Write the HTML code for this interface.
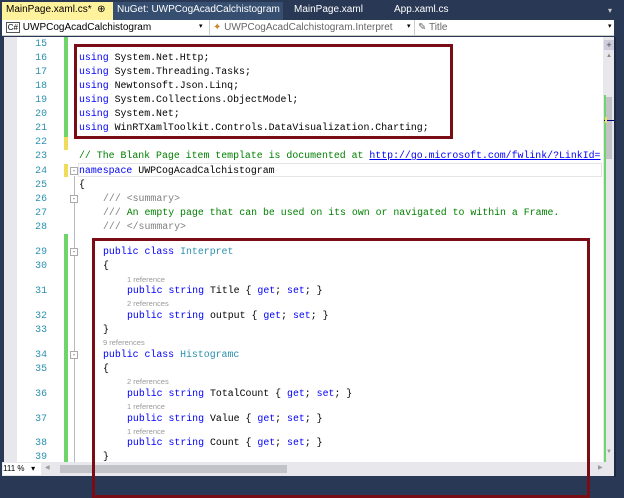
<!DOCTYPE html>
<html><head><meta charset="utf-8"><style>
*{margin:0;padding:0;box-sizing:border-box}
html,body{width:624px;height:485px}
body{background:#293955;position:relative;overflow:hidden;font-family:"Liberation Sans",sans-serif}
.a{position:absolute}
.tab{position:absolute;top:2px;height:18px;font-size:10px;line-height:16px;color:#fff;padding-left:4px}
.ln{position:absolute;left:17px;width:30px;text-align:right;font-family:"Liberation Mono",monospace;font-size:9.9px;color:#2b91af;line-height:12px}
.c{position:absolute;font-family:"Liberation Mono",monospace;font-size:9.9px;line-height:12px;white-space:pre;color:#000}
.k{color:#0000ff}.t{color:#2b91af}.g{color:#008000}.gr{color:#808080}
.r{position:absolute;font-size:7.5px;color:#999;line-height:9px}
.box{position:absolute;border:3px solid #7a0c15}
.ob{position:absolute;left:70px;width:8px;height:8px;border:1px solid #aaa;background:#fff;font-size:8px;line-height:5px;text-align:center;color:#666}
</style></head><body>
<div class="tab" style="left:2px;width:111px;background:#fff29d;color:#000">MainPage.xaml.cs* &nbsp;⊕ ✕</div>
<div class="tab" style="left:113px;width:170px;background:#364e6f">NuGet: UWPCogAcadCalchistogram</div>
<div class="tab" style="left:290px">MainPage.xaml</div>
<div class="tab" style="left:390px">App.xaml.cs</div>
<div class="a" style="left:608px;top:6px;color:#ccc;font-size:8px">▾</div>
<div class="a" style="left:2px;top:20px;width:612px;height:16px;background:#fff;border-bottom:1px solid #ccc"></div>
<div class="a" style="left:3px;top:21px;width:203px;height:14px;background:#fff;font-size:10px;line-height:14px;color:#000">&nbsp;<span style="font-size:8px;border:1px solid #555;padding:0 1px">C#</span> UWPCogAcadCalchistogram</div>
<div class="a" style="left:199px;top:22px;font-size:7px">▾</div>
<div class="a" style="left:209px;top:20px;width:1px;height:16px;background:#ccc"></div>
<div class="a" style="left:213px;top:21px;font-size:10px;line-height:14px;color:#666"><span style="color:#c8852b">✦</span> UWPCogAcadCalchistogram.Interpret</div>
<div class="a" style="left:407px;top:22px;font-size:7px">▾</div>
<div class="a" style="left:414px;top:20px;width:1px;height:16px;background:#ccc"></div>
<div class="a" style="left:418px;top:21px;font-size:10px;line-height:14px;color:#666">✎ Title</div>
<div class="a" style="left:608px;top:22px;font-size:7px">▾</div>
<div class="a" style="left:4px;top:37px;width:13px;height:426px;background:#e8e8ec"></div>
<div class="a" style="left:17px;top:37px;width:586px;height:426px;background:#fff"></div>
<div class="a" style="left:603px;top:37px;width:11px;height:426px;background:#e8e8ec"></div>
<div class="a" style="left:604px;top:40px;width:10px;height:10px;font-size:9px;line-height:10px;color:#444;text-align:center;background:#ccd">+</div>
<div class="a" style="left:606px;top:53px;font-size:6px;color:#888">▲</div>
<div class="a" style="left:604px;top:95px;width:2px;height:368px;background:#6fd46a"></div>
<div class="a" style="left:606px;top:97px;width:6px;height:62px;background:#c2c3c9"></div>
<div class="a" style="left:604px;top:120px;width:12px;height:1px;background:#00008b"></div>
<div class="a" style="left:605px;top:117px;width:2px;height:6px;background:#f0dc5a"></div>
<div class="a" style="left:614px;top:37px;width:2px;height:440px;background:#1c2a44"></div>
<div class="a" style="left:64px;top:37px;width:4px;height:100px;background:#6fd46a"></div>
<div class="a" style="left:64px;top:137px;width:4px;height:13px;background:#f0dc5a"></div>
<div class="a" style="left:64px;top:164px;width:4px;height:13px;background:#f0dc5a"></div>
<div class="a" style="left:64px;top:234px;width:4px;height:229px;background:#6fd46a"></div>
<div class="a" style="left:74px;top:176px;width:1px;height:287px;background:#bbb"></div>
<div class="ob" style="top:167px">-</div>
<div class="ob" style="top:195px">-</div>
<div class="ob" style="top:248px">-</div>
<div class="ob" style="top:351px">-</div>
<div class="a" style="left:78px;top:163px;width:524px;height:14px;border:1px solid #e4e4e4"></div>
<div class="ln" style="top:38px">15</div><div class="ln" style="top:52px">16</div><div class="ln" style="top:66px">17</div><div class="ln" style="top:80px">18</div><div class="ln" style="top:94px">19</div><div class="ln" style="top:108px">20</div><div class="ln" style="top:122px">21</div><div class="ln" style="top:136px">22</div><div class="ln" style="top:150px">23</div><div class="ln" style="top:165px">24</div><div class="ln" style="top:179px">25</div><div class="ln" style="top:193px">26</div><div class="ln" style="top:207px">27</div><div class="ln" style="top:221px">28</div><div class="ln" style="top:246px">29</div><div class="ln" style="top:260px">30</div><div class="ln" style="top:285px">31</div><div class="ln" style="top:310px">32</div><div class="ln" style="top:324px">33</div><div class="ln" style="top:349px">34</div><div class="ln" style="top:363px">35</div><div class="ln" style="top:388px">36</div><div class="ln" style="top:413px">37</div><div class="ln" style="top:437px">38</div><div class="ln" style="top:451px">39</div>
<div class="c" style="left:79px;top:52px"><span class="k">using</span> System.Net.Http;</div>
<div class="c" style="left:79px;top:66px"><span class="k">using</span> System.Threading.Tasks;</div>
<div class="c" style="left:79px;top:80px"><span class="k">using</span> Newtonsoft.Json.Linq;</div>
<div class="c" style="left:79px;top:94px"><span class="k">using</span> System.Collections.ObjectModel;</div>
<div class="c" style="left:79px;top:108px"><span class="k">using</span> System.Net;</div>
<div class="c" style="left:79px;top:122px"><span class="k">using</span> WinRTXamlToolkit.Controls.DataVisualization.Charting;</div>
<div class="c g" style="left:79px;top:150px">// The Blank Page item template is documented at <span style="color:#0000ff;text-decoration:underline">http://go.microsoft.com/fwlink/?LinkId=</span></div>
<div class="c" style="left:79px;top:165px"><span class="k">namespace</span> UWPCogAcadCalchistogram</div>
<div class="c" style="left:79px;top:179px">{</div>
<div class="c gr" style="left:103px;top:193px">/// &lt;summary&gt;</div>
<div class="c" style="left:103px;top:207px"><span class="gr">///</span><span class="g"> An empty page that can be used on its own or navigated to within a Frame.</span></div>
<div class="c gr" style="left:103px;top:221px">/// &lt;/summary&gt;</div>
<div class="c" style="left:103px;top:246px"><span class="k">public class</span> <span class="t">Interpret</span></div>
<div class="c" style="left:103px;top:260px">{</div>
<div class="r" style="left:127px;top:275px">1 reference</div>
<div class="c" style="left:127px;top:285px"><span class="k">public string</span> Title { <span class="k">get</span>; <span class="k">set</span>; }</div>
<div class="r" style="left:127px;top:299px">2 references</div>
<div class="c" style="left:127px;top:310px"><span class="k">public string</span> output { <span class="k">get</span>; <span class="k">set</span>; }</div>
<div class="c" style="left:103px;top:324px">}</div>
<div class="r" style="left:103px;top:338px">9 references</div>
<div class="c" style="left:103px;top:349px"><span class="k">public class</span> <span class="t">Histogramc</span></div>
<div class="c" style="left:103px;top:363px">{</div>
<div class="r" style="left:127px;top:377px">2 references</div>
<div class="c" style="left:127px;top:388px"><span class="k">public string</span> TotalCount { <span class="k">get</span>; <span class="k">set</span>; }</div>
<div class="r" style="left:127px;top:402px">1 reference</div>
<div class="c" style="left:127px;top:413px"><span class="k">public string</span> Value { <span class="k">get</span>; <span class="k">set</span>; }</div>
<div class="r" style="left:127px;top:427px">1 reference</div>
<div class="c" style="left:127px;top:437px"><span class="k">public string</span> Count { <span class="k">get</span>; <span class="k">set</span>; }</div>
<div class="c" style="left:103px;top:451px">}</div>
<div class="a" style="left:2px;top:462px;width:612px;height:14px;background:#e8e8ec"></div>
<div class="a" style="left:3px;top:463px;width:38px;height:12px;background:#fff;font-size:8px;line-height:12px">111 % &nbsp;&nbsp;▾</div>
<div class="a" style="left:45px;top:464px;font-size:6px;color:#999">◀</div>
<div class="a" style="left:60px;top:465px;width:227px;height:8px;background:#c2c3c9"></div>
<div class="a" style="left:598px;top:464px;font-size:6px;color:#999">▶</div>
<div class="a" style="left:606px;top:449px;font-size:6px;color:#999">▼</div>
<div class="box" style="left:74px;top:44px;width:379px;height:95px"></div>
<div class="box" style="left:92px;top:238px;width:498px;height:260px"></div>
</body></html>
